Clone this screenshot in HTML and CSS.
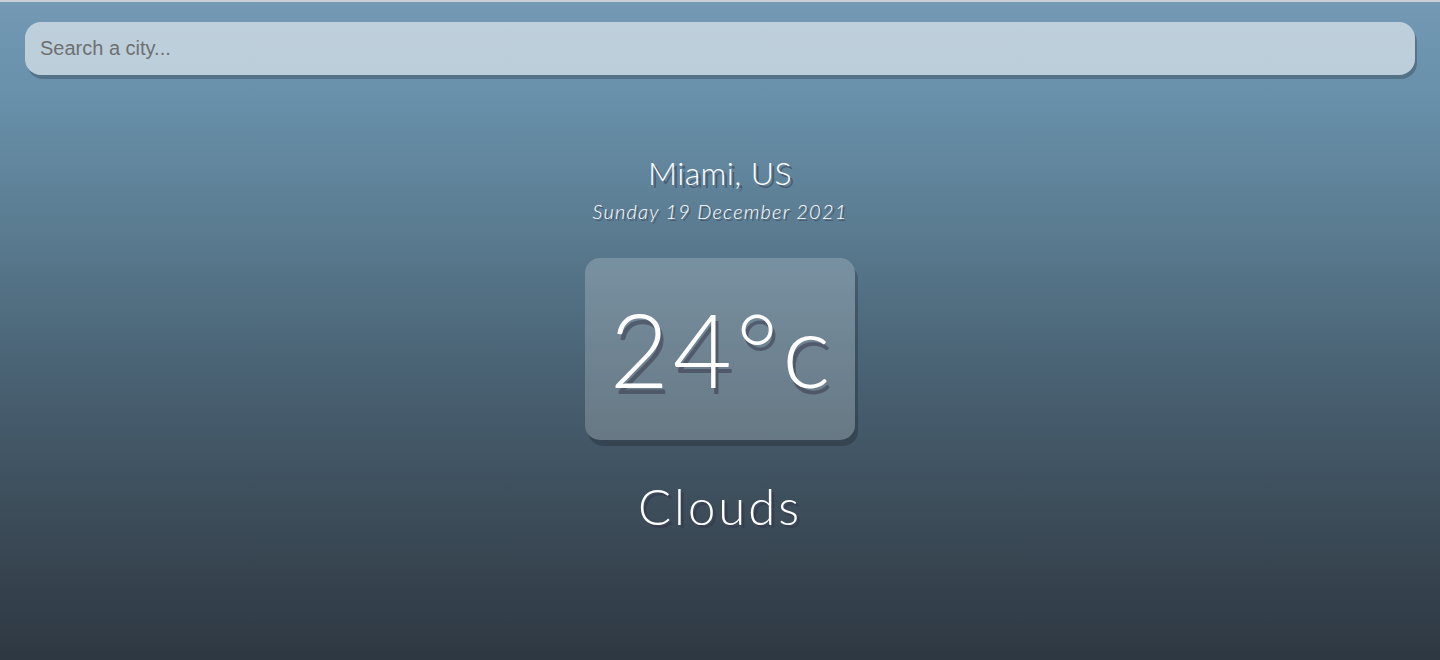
FILE: index.html
```html
<!DOCTYPE html>
<html lang="en">
<head>
<meta charset="utf-8">
<title>Weather</title>
<link rel="stylesheet" href="styles.css">
</head>
<body>
<div class="topline"></div>
<main class="app">
  <div class="search-box">
    <input class="search-bar" type="text" placeholder="Search a city...">
  </div>
  <div class="location-box">
    <div class="location">Miami, US</div>
    <div class="date">Sunday 19 December 2021</div>
  </div>
  <div class="weather-box">
    <div class="temp">24°c</div>
    <div class="weather">Clouds</div>
  </div>
</main>
</body>
</html>
```
FILE: styles.css
```css
* { box-sizing: border-box; margin: 0; padding: 0; }
html, body { height: 100%; }
body {
  font-family: "Lato", "Noto Sans", sans-serif;
  background: #2e3a44;
  overflow: hidden;
}
.topline {
  height: 2px;
  background: #c9cfd4;
}
.app {
  height: 658px;
  padding: 20px 25px 25px;
  background: linear-gradient(to bottom, #7399b4 0%, #6890aa 15%, #5a7b90 35%, #4a6375 55%, #3c4c59 78%, #2e3842 100%);
}
.search-box {
  margin-bottom: 78px;
}
.search-bar {
  display: block;
  width: 100%;
  height: 53px;
  padding: 0 15px;
  border: none;
  outline: none;
  border-radius: 16px;
  background: rgba(255, 255, 255, 0.55);
  box-shadow: 2px 4px rgba(0, 0, 0, 0.22);
  font-family: "Liberation Sans", Arial, sans-serif;
  font-size: 20px;
  color: #313131;
}
.search-bar::placeholder { color: #6e6f71; }
.location-box { text-align: center; color: #fff; }
.location {
  font-size: 32px;
  font-weight: 300;
  line-height: 40px;
  letter-spacing: 0.4px;
  text-shadow: 3px 3px rgba(50, 50, 70, 0.5);
}
.date {
  font-size: 20px;
  font-weight: 300;
  font-style: italic;
  line-height: 28px;
  margin-top: 4px;
  letter-spacing: 1.2px;
  text-shadow: 2px 2px rgba(50, 50, 70, 0.5);
}
.weather-box { text-align: center; color: #fff; }
.temp {
  display: inline-block;
  margin: 33px auto 36px;
  width: 270px;
  height: 182px;
  line-height: 182px;
  border-radius: 15px;
  background: rgba(255, 255, 255, 0.2);
  box-shadow: 3px 6px rgba(0, 0, 0, 0.2);
  font-size: 102px;
  font-weight: 300;
  letter-spacing: 4px;
  padding-left: 4px;
  text-shadow: 3px 6px rgba(50, 50, 70, 0.5);
}
.weather {
  font-size: 49px;
  font-weight: 300;
  line-height: 60px;
  letter-spacing: 3px;
  text-shadow: 3px 3px rgba(50, 50, 70, 0.5);
}
```
